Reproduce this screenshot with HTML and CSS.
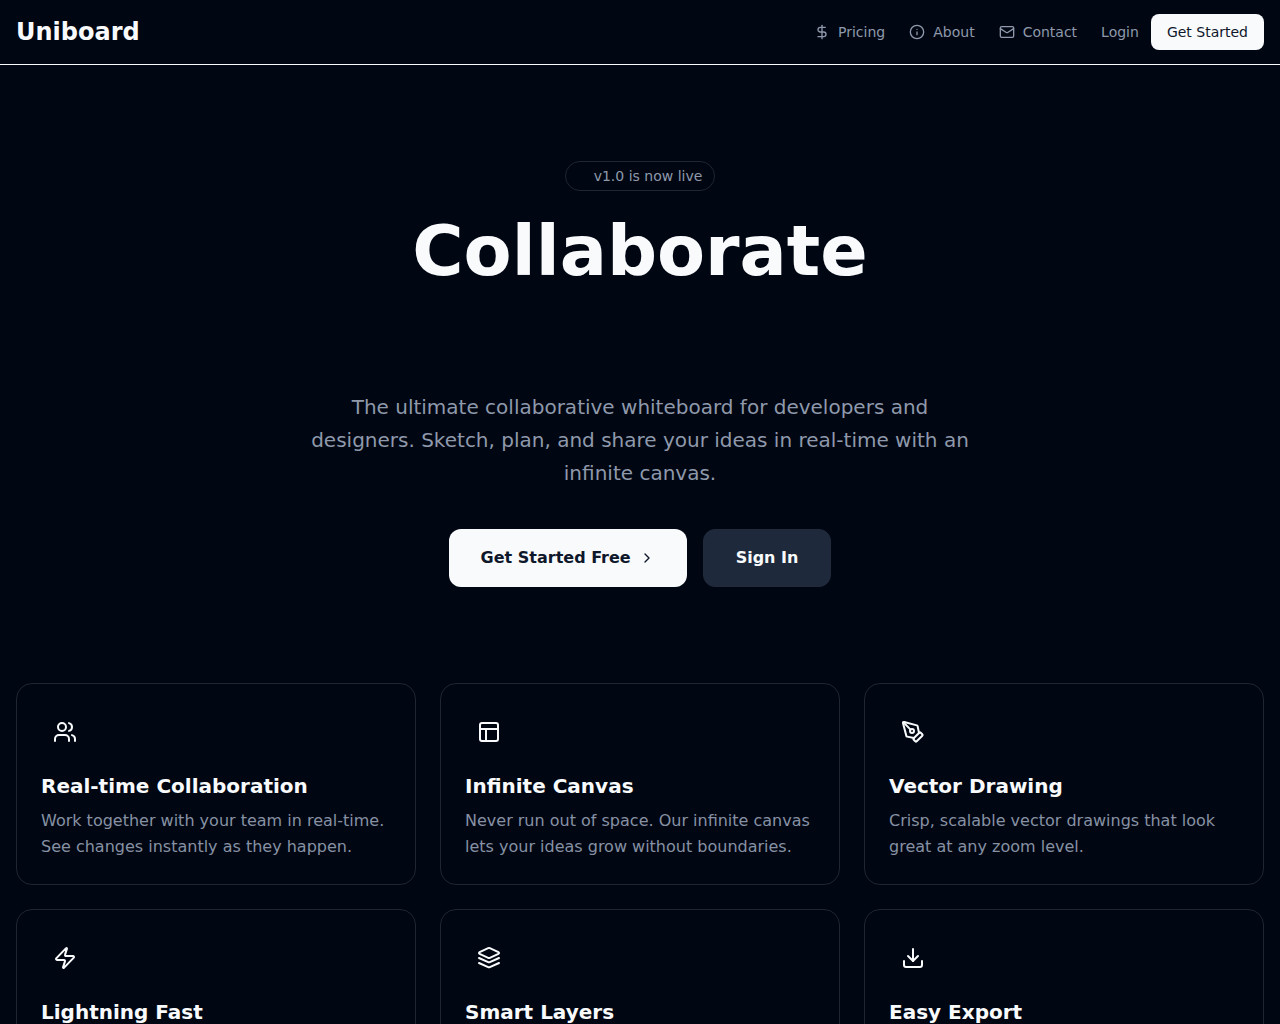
FILE: index.html
```html
<!DOCTYPE html>
<html lang="en">

<head>
    <meta charset="UTF-8">
    <meta name="viewport" content="width=device-width, initial-scale=1.0">
    <title>Uniboard</title>
    <link rel="stylesheet" href="styles.css">
</head>

<body>
    <header class="header">
        <a href="#" class="logo">Uniboard</a>
        <nav class="nav">
            <a href="#pricing" class="nav-link">
                <svg class="icon" viewBox="0 0 24 24"><path d="M12 2v20"/><path d="M17 5H9.5a3.5 3.5 0 0 0 0 7h5a3.5 3.5 0 0 1 0 7H6"/></svg>
                Pricing
            </a>
            <a href="#about" class="nav-link">
                <svg class="icon" viewBox="0 0 24 24"><circle cx="12" cy="12" r="10"/><path d="M12 16v-4"/><path d="M12 8h.01"/></svg>
                About
            </a>
            <a href="#contact" class="nav-link">
                <svg class="icon" viewBox="0 0 24 24"><rect x="2" y="4" width="20" height="16" rx="2"/><path d="m22 7-8.97 5.7a1.94 1.94 0 0 1-2.06 0L2 7"/></svg>
                Contact
            </a>
            <div class="nav-actions">
                <a href="#login" class="nav-link">Login</a>
                <button type="button" class="btn-small">Get Started</button>
            </div>
        </nav>
    </header>

    <main>
        <!-- Hero -->
        <section class="hero">
            <div class="badge"><span class="badge-dot"></span>v1.0 is now live</div>
            <h1>Collaborate</h1>
            <p class="hero-text">The ultimate collaborative whiteboard for developers and designers. Sketch, plan, and share your ideas in real-time with an infinite canvas.</p>
            <div class="hero-actions">
                <button type="button" class="btn btn-primary">
                    Get Started Free
                    <svg class="icon" viewBox="0 0 24 24"><path d="m9 18 6-6-6-6"/></svg>
                </button>
                <button type="button" class="btn btn-secondary">Sign In</button>
            </div>
        </section>

        <!-- Features -->
        <section class="features">
            <article class="card">
                <div class="card-icon">
                    <svg class="icon" viewBox="0 0 24 24"><path d="M16 21v-2a4 4 0 0 0-4-4H6a4 4 0 0 0-4 4v2"/><circle cx="9" cy="7" r="4"/><path d="M22 21v-2a4 4 0 0 0-3-3.87"/><path d="M16 3.13a4 4 0 0 1 0 7.75"/></svg>
                </div>
                <h3>Real-time Collaboration</h3>
                <p>Work together with your team in real-time. See changes instantly as they happen.</p>
            </article>
            <article class="card">
                <div class="card-icon">
                    <svg class="icon" viewBox="0 0 24 24"><rect x="3" y="3" width="18" height="18" rx="2"/><path d="M3 9h18"/><path d="M9 21V9"/></svg>
                </div>
                <h3>Infinite Canvas</h3>
                <p>Never run out of space. Our infinite canvas lets your ideas grow without boundaries.</p>
            </article>
            <article class="card">
                <div class="card-icon">
                    <svg class="icon" viewBox="0 0 24 24"><path d="M15.707 21.293a1 1 0 0 1-1.414 0l-1.586-1.586a1 1 0 0 1 0-1.414l5.586-5.586a1 1 0 0 1 1.414 0l1.586 1.586a1 1 0 0 1 0 1.414z"/><path d="m18 13-1.375-6.874a1 1 0 0 0-.746-.776L3.235 2.028a1 1 0 0 0-1.207 1.207L5.35 15.879a1 1 0 0 0 .776.746L13 18"/><path d="m2.3 2.3 7.286 7.286"/><circle cx="11" cy="11" r="2"/></svg>
                </div>
                <h3>Vector Drawing</h3>
                <p>Crisp, scalable vector drawings that look great at any zoom level.</p>
            </article>
            <article class="card">
                <div class="card-icon">
                    <svg class="icon" viewBox="0 0 24 24"><path d="M4 14a1 1 0 0 1-.78-1.63l9.9-10.2a.5.5 0 0 1 .86.46l-1.92 6.02A1 1 0 0 0 13 10h7a1 1 0 0 1 .78 1.63l-9.9 10.2a.5.5 0 0 1-.86-.46l1.92-6.02A1 1 0 0 0 11 14z"/></svg>
                </div>
                <h3>Lightning Fast</h3>
            </article>
            <article class="card">
                <div class="card-icon">
                    <svg class="icon" viewBox="0 0 24 24"><path d="m12.83 2.18a2 2 0 0 0-1.66 0L2.6 6.08a1 1 0 0 0 0 1.83l8.58 3.91a2 2 0 0 0 1.66 0l8.58-3.9a1 1 0 0 0 0-1.83z"/><path d="m22 12-9.17 4.16a2 2 0 0 1-1.66 0L2 12"/><path d="m22 17-9.17 4.16a2 2 0 0 1-1.66 0L2 17"/></svg>
                </div>
                <h3>Smart Layers</h3>
            </article>
            <article class="card">
                <div class="card-icon">
                    <svg class="icon" viewBox="0 0 24 24"><path d="M21 15v4a2 2 0 0 1-2 2H5a2 2 0 0 1-2-2v-4"/><path d="m7 10 5 5 5-5"/><path d="M12 15V3"/></svg>
                </div>
                <h3>Easy Export</h3>
            </article>
        </section>
    </main>
</body>

</html>
```
FILE: styles.css
```css
* {
    margin: 0;
    padding: 0;
    box-sizing: border-box;
}

body {
    background-color: #000713;
    color: #f8fafc;
    font-family: "DejaVu Sans", sans-serif;
    font-size: 16px;
    line-height: 24px;
}

a {
    color: inherit;
    text-decoration: none;
}

button {
    border: none;
    font-family: inherit;
    cursor: pointer;
}

.icon {
    width: 16px;
    height: 16px;
    flex-shrink: 0;
    fill: none;
    stroke: currentColor;
    stroke-width: 2;
    stroke-linecap: round;
    stroke-linejoin: round;
}

/* Header */
.header {
    display: flex;
    align-items: center;
    justify-content: space-between;
    padding: 14px 16px;
    border-bottom: 1px solid #f8fafc;
}

.logo {
    font-size: 24px;
    line-height: 33px;
    font-weight: bold;
}

.nav {
    display: flex;
    align-items: center;
    gap: 24px;
    font-size: 14px;
    line-height: 20px;
}

.nav-link {
    display: flex;
    align-items: center;
    gap: 8px;
    color: #8f99ab;
}

.nav-link:hover {
    color: #f8fafc;
}

.nav-actions {
    display: flex;
    align-items: center;
    gap: 12px;
}

.btn-small {
    padding: 8px 16px;
    border-radius: 8px;
    background: #f8fafc;
    color: #0f172a;
    font-size: 14px;
    line-height: 20px;
}

/* Hero */
.hero {
    display: flex;
    flex-direction: column;
    align-items: center;
    padding: 96px 16px;
    text-align: center;
}

.badge {
    display: flex;
    align-items: center;
    gap: 8px;
    margin-bottom: 24px;
    padding: 4px 12px;
    border: 1px solid #1f2633;
    border-radius: 15px;
    color: #8f99ab;
    font-size: 14px;
    line-height: 20px;
}

.badge-dot {
    width: 8px;
    height: 8px;
    border-radius: 50%;
}

h1 {
    min-height: 144px;
    margin-bottom: 32px;
    font-size: 70px;
    line-height: 72px;
    font-weight: bold;
}

.hero-text {
    max-width: 672px;
    margin-bottom: 39px;
    color: #8f99ab;
    font-size: 20px;
    line-height: 33px;
}

.hero-actions {
    display: flex;
    flex-wrap: wrap;
    justify-content: center;
    gap: 16px;
}

.btn {
    display: flex;
    align-items: center;
    gap: 8px;
    padding: 16px 32px;
    border-radius: 12px;
    font-size: 16px;
    line-height: 24px;
    font-weight: bold;
}

.btn-primary {
    background: #f8fafc;
    color: #0f172a;
}

.btn-secondary {
    border: 1px solid #202a3b;
    background: #1e293b;
    color: #f8fafc;
}

/* Features */
.features {
    display: grid;
    grid-template-columns: repeat(3, 1fr);
    gap: 24px;
    padding: 0 16px 96px;
}

.card {
    padding: 24px;
    border: 1px solid #1f2633;
    border-radius: 16px;
}

.card-icon {
    display: flex;
    align-items: center;
    justify-content: center;
    width: 48px;
    height: 48px;
    margin-bottom: 16px;
}

.card-icon .icon {
    width: 24px;
    height: 24px;
}

.card h3 {
    font-size: 20px;
    line-height: 28px;
    font-weight: bold;
}

.card p {
    margin-top: 8px;
    color: #8791a3;
    line-height: 26px;
}

@media (max-width: 900px) {
    .features {
        grid-template-columns: 1fr;
    }
}
```
